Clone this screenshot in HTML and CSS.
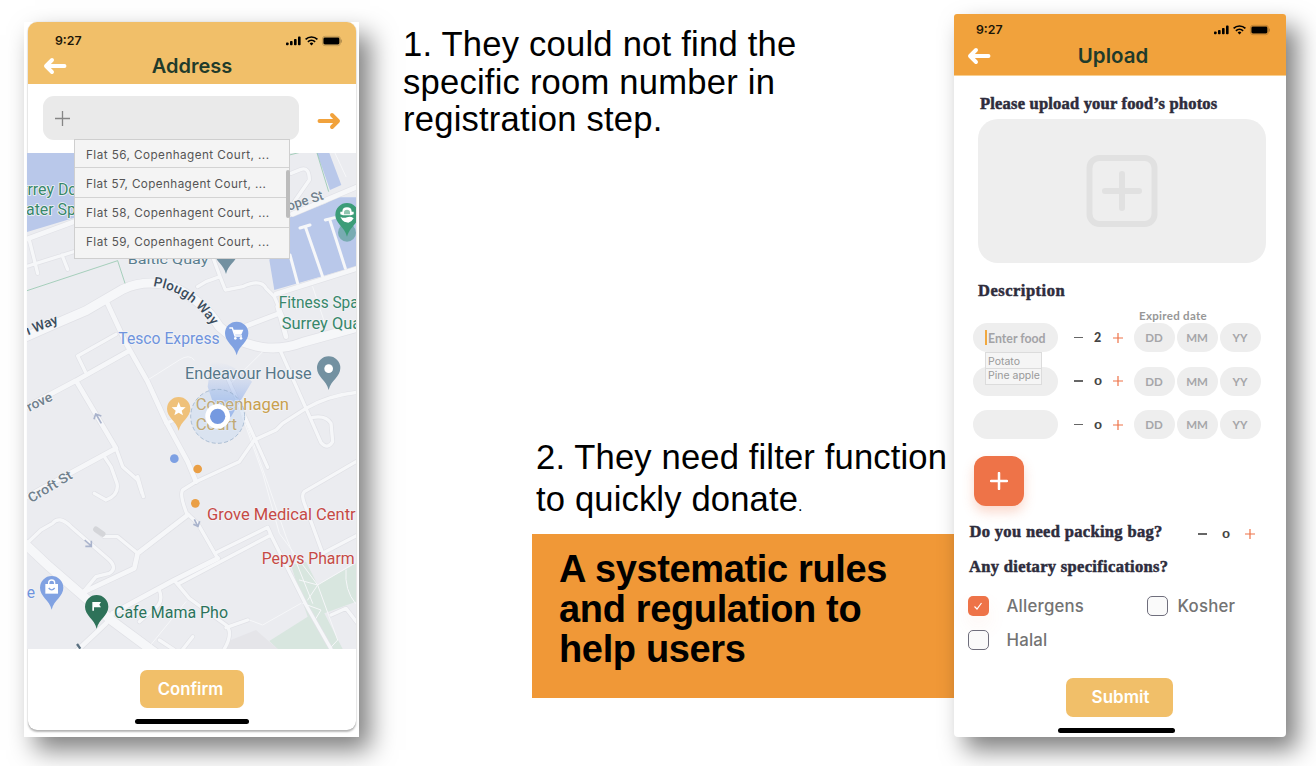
FILE: index.html
```html
<!DOCTYPE html>
<html lang="en">
<head>
<meta charset="utf-8">
<title>User testing findings</title>
<link rel="stylesheet" href="styles.css">
</head>
<body>
<svg class="defs" width="0" height="0">
  <defs>
    <symbol id="status" viewBox="0 0 56 12">
      <rect x="0" y="7.5" width="2.6" height="2.8" rx=".8"/><rect x="4" y="6" width="2.6" height="4.3" rx=".8"/><rect x="8" y="4" width="2.6" height="6.3" rx=".8"/><rect x="12" y="1.6" width="2.6" height="8.7" rx=".8"/>
      <g fill="none" stroke="#000" stroke-width="1.7"><path d="M19.6 4.4a8.4 8.4 0 0 1 11.8 0"/><path d="M21.9 6.9a5.2 5.2 0 0 1 7.2 0"/></g>
      <path d="M23.6 8.4a3 3 0 0 1 3.8 0L25.5 10.6Z"/>
      <rect x="36.4" y="1.3" width="18" height="9.4" rx="2.6" fill="none" stroke="#000" stroke-opacity=".18"/><rect x="37.4" y="2.6" width="16" height="6.8" rx="1.4"/><path d="M55.3 4.6v3" stroke="#000" stroke-opacity=".3"/>
    </symbol>
    <symbol id="back" viewBox="0 0 24 18"><path d="M21.500 9H4M9 3 3 9l6 6" fill="none" stroke="currentColor" stroke-width="3.900" stroke-linecap="round" stroke-linejoin="round"/></symbol>
    <symbol id="pin" viewBox="-36 -36 72 104" overflow="visible"><path d="M0 66C-7 36-35 27-35 0A35 35 0 0 1 35 0C35 27 7 36 0 66Z"/></symbol>
    <symbol id="plus" viewBox="0 0 10 10"><path d="M5 0v10M0 5h10" fill="none" stroke="currentColor" stroke-width="1.200"/></symbol>
  </defs>
</svg>

<main class="slide">
  <section class="frame frame-address">
    <div class="card">
      <header class="bar bar-address">
        <div class="status"><span>9:27</span><svg class="status-icons"><use href="#status"/></svg></div>
        <div class="titlebar"><svg class="back"><use href="#back"/></svg><h1>Address</h1></div>
      </header>
      <div class="search">
        <div class="search-field">
          <svg class="search-plus" viewBox="0 0 15 15"><path d="M7.500 0v15M0 7.500h15" stroke="#868686" stroke-width="1.300"/></svg>
          <ul class="options">
            <li>Flat 56, Copenhagent Court, ...</li>
            <li>Flat 57, Copenhagent Court, ...</li>
            <li>Flat 58, Copenhagent Court, ...</li>
            <li>Flat 59, Copenhagent Court, ...</li>
          </ul>
        </div>
        <svg class="go"><use href="#back"/></svg>
      </div>
      <svg class="map" viewBox="33 39 987 1488" preserveAspectRatio="none">
        <defs>
          <linearGradient id="beam" x1="0" y1="0" x2="0" y2="1"><stop offset="0" stop-color="#96b4ec" stop-opacity="0"/><stop offset="1" stop-color="#7fa2e8" stop-opacity=".75"/></linearGradient>
          <g id="major"><path d="M20 595 110 555 210 512 320 448Q390 415 470 440 560 480 610 560 660 610 740 622 800 630 860 607L1030 560"/><path d="M20 1205 100 1280 210 1375 285 1440 420 1540"/></g>
          <g id="minor">
            <path d="M33 297 180 243M272 485 330 610 395 725 450 845 515 965 540 1025M340 632 180 722 33 800M180 722 300 925 33 1070M830 222 1025 140M1025 385 780 462M690 558 790 520M785 500 810 590"/>
            <path d="M270 1450 180 1535M515 1125 365 1240 355 1285 195 1360M605 1255 475 1320 290 1420"/>
          </g>
          <g id="lane">
            <path d="M300 583 185 648 208 695M300 925 320 980 365 1020 378 1060M265 950 285 980 303 1030Q310 1065 270 1080L235 1060M365 1010 382 1070M790 625 870 805 915 908Q935 930 950 905L945 850Q930 825 890 832M870 805Q940 765 1025 757M870 805 800 850 780 870 715 900 670 965 540 1025 500 1050Q490 1065 512 1120L545 1150 605 1255M635 715 755 982M450 850 480 838"/>
            <path d="M1025 962 865 1055Q855 1065 865 1090L920 1240 1025 1185M365 1240 305 1190 265 1190 240 1170M33 1210 75 1170 110 1150Q130 1125 165 1160L280 1260Q305 1285 280 1300L240 1310 200 1358M600 1238 755 1162 765 1185 490 1330M478 1325 520 1375 630 1455Q655 1480 620 1535M630 1463 695 1440M430 1350Q445 1390 410 1410L370 1445M430 1500 475 1530M530 1490 495 1535M762 1180 870 1395 945 1527M545 440 570 425 612 410 628 450 680 440Q735 415 750 445L775 470 800 530M590 350 612 410M40 300 65 400M36 378 180 333M138 345 155 388M825 100 855 88Q880 80 880 120L835 185M945 1425 990 1405 1025 1450"/>
          </g>
        </defs>
        <rect x="30" y="30" width="1000" height="1500" fill="#ebecf0"/>
        <path d="M30 39H180V232L30 277Z" fill="#b9c8ea"/>
        <path d="M815 235 930 190 960 172H1025V378L775 450 760 360ZM903 39H940L976 135 942 150Z" fill="#b9c8ea"/>
        <path d="M825 1275 870 1265 905 1335 1020 1270V1385L925 1420 980 1527H785L760 1503 875 1430 855 1370Z" fill="#d8e6df"/>
        <path d="M620 1527 645 1500 720 1470 785 1527Z" fill="#e5e5e9"/>
        <use href="#major" class="road case" stroke-width="31"/>
        <use href="#minor" class="road case" stroke-width="18"/>
        <use href="#lane" class="road case" stroke-width="14"/>
        <use href="#major" class="road" stroke-width="27"/>
        <use href="#minor" class="road" stroke-width="14"/>
        <use href="#lane" class="road" stroke-width="10"/>
        <path class="road" stroke-width="3" d="M640 720 740 1000 790 1180 905 1335 965 1500 940 1527M655 750 755 1030 810 1190 890 1390M395 720 490 660Q520 640 535 660M740 635 640 735M700 1440 740 1455 855 1390M850 1320 905 1335 875 1380M905 1335 1015 1270M990 1290Q985 1350 1018 1390M860 1390 915 1410 900 1435M510 1385 400 1520M890 440 925 545M955 35 990 110"/>
        <path class="road" stroke-width="9" d="M852 264 882 255M868 260 920 410M928 240 956 233M941 238 988 385M822 345 845 430"/>
        <path d="M33 452 305 362 327 430M820 45 860 35M903 39 938 155" fill="none" stroke="#82bfa0" stroke-width="2"/>
        <path d="M240 1168l20 14" stroke="#d4d5d9" stroke-width="17" stroke-linecap="round"/>
        <g fill="none" stroke="#a9b3cc" stroke-width="5"><path d="M256 850 240 822M234 838 239 822 256 828M206 1200 226 1218M226 1202V1219H208M535 1138 545 1158M532 1153 546 1159 551 1144"/></g>
        <path d="M605 830 575 740 585 665Q650 665 708 725L645 830Z" fill="url(#beam)"/>

        <g class="label">
          <text x="18" y="165" fill="#37876b" textLength="164" lengthAdjust="spacingAndGlyphs">rrrey Dc</text>
          <text x="30" y="226" fill="#37876b" textLength="150" lengthAdjust="spacingAndGlyphs">ater Sp</text>
          <text class="area" x="335" y="373" fill="#5a7e8f" textLength="242" lengthAdjust="spacingAndGlyphs">Baltic Quay</text>
          <text x="788" y="504" fill="#37876b" textLength="240" lengthAdjust="spacingAndGlyphs">Fitness Spa</text>
          <text x="797" y="566" fill="#37876b" textLength="239" lengthAdjust="spacingAndGlyphs">Surrey Qua</text>
          <text x="307" y="613" fill="#6f93dd" textLength="304" lengthAdjust="spacingAndGlyphs">Tesco Express</text>
          <text x="507" y="717" fill="#567789" textLength="380" lengthAdjust="spacingAndGlyphs">Endeavour House</text>
          <text x="539" y="809" fill="#c9a04e" textLength="280" lengthAdjust="spacingAndGlyphs">Copenhagen</text>
          <text x="539" y="870" fill="#c9a04e" textLength="124" lengthAdjust="spacingAndGlyphs">Court</text>
          <text x="573" y="1141" fill="#c64a45" textLength="446" lengthAdjust="spacingAndGlyphs">Grove Medical Centr</text>
          <text x="737" y="1272" fill="#c64a45" textLength="279" lengthAdjust="spacingAndGlyphs">Pepys Pharm</text>
          <text x="294" y="1433" fill="#2b735b" textLength="342" lengthAdjust="spacingAndGlyphs">Cafe Mama Pho</text>
          <text x="32" y="1375" fill="#6f93dd">e</text>
        </g>
        <g class="label street">
          <text transform="translate(36 586) rotate(-22)" textLength="100" lengthAdjust="spacingAndGlyphs" fill="#3a4c5c">ı Way</text>
          <text transform="translate(40 815) rotate(-26)" textLength="80" lengthAdjust="spacingAndGlyphs">rove</text>
          <text transform="translate(46 1089) rotate(-31)" textLength="147" lengthAdjust="spacingAndGlyphs">Croft St</text>
          <text transform="translate(818 212) rotate(-18)" textLength="112" lengthAdjust="spacingAndGlyphs">ope St</text>
          <path id="plough" d="M411 438C480 448 540 485 592 562" fill="none" stroke="none"/>
          <text fill="#3a4c5c"><textPath href="#plough" textLength="220">Plough Way</textPath></text>
          <path d="M183 1512l10 14" stroke="#5a7080" stroke-width="7"/>
        </g>

        <circle cx="605" cy="829" r="81" fill="#a9c8ee" fill-opacity=".25" stroke="#8fa9c6" stroke-width="2" stroke-dasharray="12 7"/>
        <circle cx="605" cy="829" r="37" fill="#fff"/><circle cx="605" cy="829" r="23" fill="#7599e0"/>
        <circle cx="475" cy="956" r="13" fill="#7da0e3"/><circle cx="545" cy="987" r="13" fill="#ea9f45"/><circle cx="538" cy="1090" r="13" fill="#ea9f45"/>

        <g transform="translate(630 336)" fill="#7391a1"><use href="#pin" x="-36" y="-36" width="72" height="104"/></g>
        <g transform="translate(662 580)" fill="#81a2e2"><use href="#pin" x="-36" y="-36" width="72" height="104"/>
          <path d="M-22-16h9L-5 8H16" fill="none" stroke="#fff" stroke-width="4"/><path d="M-11-11h31L14 4H-5Z" fill="#fff"/><circle cx="-4" cy="15" r="4" fill="#fff"/><circle cx="13" cy="15" r="4" fill="#fff"/></g>
        <g transform="translate(938 684)" fill="#7391a1"><use href="#pin" x="-36" y="-36" width="72" height="104"/><circle cy="2" r="13" fill="#fff"/></g>
        <g transform="translate(488 806)" fill="#efc17a"><use href="#pin" x="-36" y="-36" width="72" height="104"/><path d="M0-20 6-5 21-4 9 6 13 20 0 12-13 20-9 6-21-4-6-5Z" fill="#fff"/></g>
        <g transform="translate(107 1343)" fill="#81a2e2"><use href="#pin" x="-36" y="-36" width="72" height="104"/><path d="M-19-11h38v29h-38Z" fill="#fff"/><path d="M-9-9v-5a9 9 0 0 1 18 0v5" fill="none" stroke="#fff" stroke-width="4"/><path d="M-9 1q9 11 18 0" fill="none" stroke="#81a2e2" stroke-width="4"/></g>
        <g transform="translate(242 1400)" fill="#2e7259"><use href="#pin" x="-36" y="-36" width="72" height="104"/><path d="M-13-14h26l-5 8 5 8H-8v10h-5Z" fill="#fff"/></g>
        <circle cx="993" cy="278" r="27" fill="#559b93" fill-opacity=".65"/>
        <g transform="translate(993 224)" fill="#3c9c78"><use href="#pin" x="-36" y="-36" width="72" height="104"/><path d="M-20-1v-8h6q0-13 14-13t14 13h6v8l-8 3H-12Z" fill="#fff"/><path d="M-9-7q0-8 9-8t9 8v6H-9Z" fill="#8fc4af"/><path d="M-20 6q10 6 20 2t20 3q-5 10-16 13l-12-3q-7-3-12-15Z" fill="#fff"/></g>
      </svg>
      <button class="cta cta-confirm">Confirm</button>
      <div class="home home-address"></div>
    </div>
  </section>

  <section class="notes">
    <p class="note note-one"><span>1. They could not find the</span><span>specific room number in</span><span class="tight">registration step.</span></p>
    <p class="note note-two"><span>2. They need filter function</span><span>to quickly donate<small>.</small></span></p>
    <div class="banner"><span>A systematic rules</span><span>and regulation to</span><span>help users</span></div>
  </section>

  <section class="frame frame-upload">
    <header class="bar bar-upload">
      <div class="status"><span>9:27</span><svg class="status-icons"><use href="#status"/></svg></div>
      <div class="titlebar"><svg class="back"><use href="#back"/></svg><h1>Upload</h1></div>
    </header>
    <h2 class="heading h-photos">Please upload your food’s photos</h2>
    <div class="photo">
      <svg viewBox="0 0 72 72" width="72" height="72" fill="none" stroke="#e1e1e1" stroke-width="6" stroke-linecap="round"><rect x="3.500" y="3" width="65" height="66" rx="10"/><path d="M36 19v34M19 36h34"/></svg>
    </div>
    <h2 class="heading h-desc">Description</h2>
    <div class="expired">Expired date</div>
    <div class="items">
      <div class="item">
        <div class="food"><i class="caret"></i>Enter food
          <ul class="suggest"><li>Potato</li><li>Pine apple</li></ul>
        </div>
        <div class="stepper"><i class="minus"></i><b>2</b><svg><use href="#plus"/></svg></div>
        <div class="dates"><span>DD</span><span>MM</span><span>YY</span></div>
      </div>
      <div class="item">
        <div class="food"></div>
        <div class="stepper"><i class="minus"></i><b class="zero">0</b><svg><use href="#plus"/></svg></div>
        <div class="dates"><span>DD</span><span>MM</span><span>YY</span></div>
      </div>
      <div class="item">
        <div class="food"></div>
        <div class="stepper"><i class="minus"></i><b class="zero">0</b><svg><use href="#plus"/></svg></div>
        <div class="dates"><span>DD</span><span>MM</span><span>YY</span></div>
      </div>
    </div>
    <button class="add"><svg viewBox="0 0 18 18" width="18" height="18"><path d="M9 1v16M1 9h16" stroke="#fff" stroke-width="2.500" stroke-linecap="round"/></svg></button>
    <div class="packing">
      <h2 class="heading h-pack">Do you need packing bag?</h2>
      <div class="stepper stepper-wide"><i class="minus"></i><b class="zero">0</b><svg><use href="#plus"/></svg></div>
    </div>
    <h2 class="heading h-diet">Any dietary specifications?</h2>
    <div class="checks">
      <div class="check"><i class="box box-on"><svg viewBox="0 0 10 10" width="10" height="10"><path d="M1.500 5.500 4 8l4.500-6" fill="none" stroke="#fff" stroke-width="1.200"/></svg></i><span>Allergens</span></div>
      <div class="check check-right"><i class="box"></i><span>Kosher</span></div>
      <div class="check"><i class="box"></i><span>Halal</span></div>
    </div>
    <button class="cta cta-submit">Submit</button>
    <div class="home home-upload"></div>
  </section>
</main>
</body>
</html>
```
FILE: styles.css
```css
* { box-sizing: border-box; }
body { margin: 0; width: 1316px; height: 766px; overflow: hidden; background: #fff; font-family: Inter, "Liberation Sans", sans-serif; }
h1, h2, p, ul { margin: 0; padding: 0; }
ul { list-style: none; }
i { display: block; font-style: normal; }
button { border: 0; padding: 0; font: inherit; }
.defs { position: absolute; }

.slide { display: flex; align-items: flex-start; width: 1316px; height: 766px; padding-left: 24px; }
.frame { flex: none; background: #fff; box-shadow: 11px 13px 24px rgba(0, 0, 0, .5); }
.frame-address { width: 335px; height: 715px; margin-top: 22px; }
.frame-upload { width: 332px; height: 723px; margin-top: 14px; border-radius: 3px 3px 4px 4px; position: relative; }

.card { width: 328px; height: 708px; margin-left: 4px; border-radius: 9px; background: #fff; box-shadow: 0 2px 2px rgba(0, 0, 0, .28), 0 0 1px rgba(0, 0, 0, .25); }
.bar { position: relative; }
.bar-address { height: 62px; background: #f1bf69; border-radius: 9px 9px 0 0; padding-top: 11px; }
.bar-upload { height: 62px; background: #f1a23c; border-bottom: 1px solid #f8cf90; border-radius: 3px 3px 0 0; padding-top: 8px; }
.status { display: flex; justify-content: space-between; align-items: center; height: 16px; font-size: 12.3px; font-weight: 600; color: #1c1608; line-height: 16px; }
.bar-address .status { padding: 0 14px 0 27px; }
.bar-upload .status { padding: 0 16px 0 22px; }
.status-icons { width: 56px; height: 12px; }
.titlebar { display: grid; grid-template-columns: 24px 1fr 24px; align-items: center; height: 24px; color: #fff; }
.bar-address .titlebar { margin: 5px 15px 0; }
.bar-upload .titlebar { margin: 6px 27px 0 13px; }
.back { width: 24px; height: 18px; }
h1 { font-size: 20px; font-weight: 600; line-height: 24px; color: #1f3b2b; text-align: center; }
.bar-upload h1 { font-size: 20.5px; }

.search { display: flex; height: 69px; padding: 12px 15px 0; justify-content: space-between; }
.search-field { position: relative; width: 256px; height: 44px; border-radius: 11px; background: #eaeaea; padding: 15px 12px; }
.search-plus { display: block; width: 15px; height: 15px; }
.go { width: 24px; height: 18px; margin-top: 16px; color: #f1a23c; transform: scaleX(-1); }
.options { position: absolute; left: 31px; top: 43px; width: 216px; height: 120px; border: 1px solid #cfcfcf; background: #f4f4f4; z-index: 2; }
.options li { height: 30px; border-bottom: 1px solid #d3d3d3; padding-left: 11px; font-size: 11.7px; letter-spacing: .45px; line-height: 32px; color: #555; white-space: nowrap; }
.options li:nth-child(2) { letter-spacing: .4px; }
.options li:first-child { height: 28px; line-height: 30px; }
.options li:nth-child(3) { line-height: 30px; }
.options li:last-child { border: 0; line-height: 29px; }
.options::after { content: ""; position: absolute; right: -1px; top: 30px; width: 4px; height: 48px; border-radius: 2px; background: #bcbcbc; }

.map { display: block; width: 329px; height: 496px; margin-left: -1px; overflow: hidden; }
.road { fill: none; stroke: #f6f7f9; stroke-linejoin: round; stroke-linecap: round; }
.road.case { stroke: #e0e1e6; }
.label { font-family: Roboto, "Open Sans", sans-serif; font-size: 47px; stroke: #f2f3f6; stroke-width: 5px; paint-order: stroke; stroke-linejoin: round; }
.area { font-size: 40px; }
.street { font-size: 40px; fill: #6f7f8c; font-weight: 500; }

.cta { display: block; color: #fff; background: #f1bf69; font-weight: 600; border-radius: 7px; text-align: center; }
.cta-confirm { width: 104px; height: 38px; margin: 21px 0 0 112px; font-size: 16.7px; line-height: 38px; padding-right: 3px; }
.cta-submit { width: 107px; height: 39px; margin: 27px 0 0 112px; font-size: 17px; line-height: 38px; padding-left: 2px; }
.home { height: 5px; border-radius: 3px; background: #000; }
.home-address { width: 114px; margin: 11px 0 0 107px; }
.home-upload { width: 117px; margin: 11px 0 0 104px; }

.notes { width: 595px; flex: none; display: flex; flex-direction: column; font-family: "Liberation Sans", Arial, sans-serif; color: #000; }
.notes span { display: block; white-space: nowrap; }
.note { font-size: 34.6px; }
.note-one { margin: 25px 0 0 44px; line-height: 38px; letter-spacing: .22px; }
.note-one .tight { line-height: 36px; }
.note-two { margin: 299px 0 0 177px; height: 84px; line-height: 42px; letter-spacing: .15px; }
.note small { font-size: 16px; line-height: 1; }
.banner { margin: 14px 0 0 173px; height: 164px; padding: 15px 0 0 27px; background: #f09837; font-size: 38px; font-weight: 700; line-height: 40px; letter-spacing: -.35px; }

.heading { font-family: "Liberation Serif", serif; font-weight: 700; font-size: 16.500px; line-height: 20px; color: #2e2c3c; white-space: nowrap; letter-spacing: .15px; -webkit-text-stroke: .5px #2e2c3c; }
.h-photos { margin: 18px 0 0 26px; letter-spacing: .2px; }
.photo { width: 288px; height: 144px; margin: 5px 0 0 24px; border-radius: 20px; background: #eee; display: grid; place-items: center; }
.h-desc { margin: 18px 0 0 24px; letter-spacing: .5px; }
.expired { margin: 7px 0 0 185px; font: 700 11.500px/15px Lato, sans-serif; letter-spacing: .3px; color: #979797; }
.items { display: flex; flex-direction: column; gap: 14.500px; padding-left: 19px; }
.item { display: flex; height: 29px; align-items: center; }
.food { position: relative; width: 85px; height: 29px; border-radius: 15px; background: #eee; padding-left: 15px; font: 700 12.300px/32px Lato, sans-serif; color: #a3a3a6; white-space: nowrap; }
.caret { position: absolute; left: 12px; top: 7px; width: 2px; height: 15px; background: #f1a83f; }
.suggest { position: absolute; left: 12px; top: 29px; width: 57px; height: 33px; border: 1px solid #dcdcdc; background: #f5f5f5; z-index: 1; font: 400 10.500px/16px Inter, sans-serif; color: #999; }
.suggest li { padding-left: 2px; height: 15px; }
.suggest li:last-child { line-height: 14px; }
.suggest li:first-child { border-bottom: 1px solid #dcdcdc; height: 16px; line-height: 17px; }
.stepper { display: grid; grid-template-columns: 9px 30px 10px; align-items: center; margin-left: 15.500px; color: #ee7348; }
.stepper b { font: 900 12.500px/16px Lato, sans-serif; color: #444; text-align: center; }
.stepper .zero { font-size: 10.500px; line-height: 16px; transform: scale(1.25, .95); }
.stepper svg { width: 10px; height: 10px; }
.minus { height: 1.500px; background: #666; }
.dates { display: flex; gap: 2px; margin-left: 11px; }
.dates span { width: 41px; height: 29px; border-radius: 15px; background: #eee; text-align: center; font: 700 11.500px/30px Lato, sans-serif; color: #a6a6a9; }
.add { display: grid; place-items: center; width: 50px; height: 50px; margin: 16.500px 0 0 19.500px; border-radius: 12px; background: #ee7348; box-shadow: 0 6px 12px rgba(238, 115, 72, .28); }
.packing { display: flex; margin: 16.500px 0 0 15.500px; justify-content: space-between; padding-right: 31px; }
.h-pack { letter-spacing: .33px; }
.stepper-wide { grid-template-columns: 9px 38px 10px; margin-top: 4px; }
.h-diet { margin: 15px 0 0 15px; letter-spacing: .32px; }
.checks { display: grid; grid-template-columns: 179px 1fr; row-gap: 13px; margin: 18.500px 0 0 14px; }
.check { display: flex; align-items: center; gap: 18px; height: 21px; font-size: 16.800px; letter-spacing: .2px; font-weight: 500; color: #737373; }
.check-right { gap: 10px; }
.box { width: 20.500px; height: 20.500px; border: 1px solid #6f6e7c; border-radius: 5px; background: #fafafa; }
.box-on { display: grid; place-items: center; border: 0; background: #ee7348; box-shadow: 0 10px 20px rgba(238, 115, 72, .08); }
```
